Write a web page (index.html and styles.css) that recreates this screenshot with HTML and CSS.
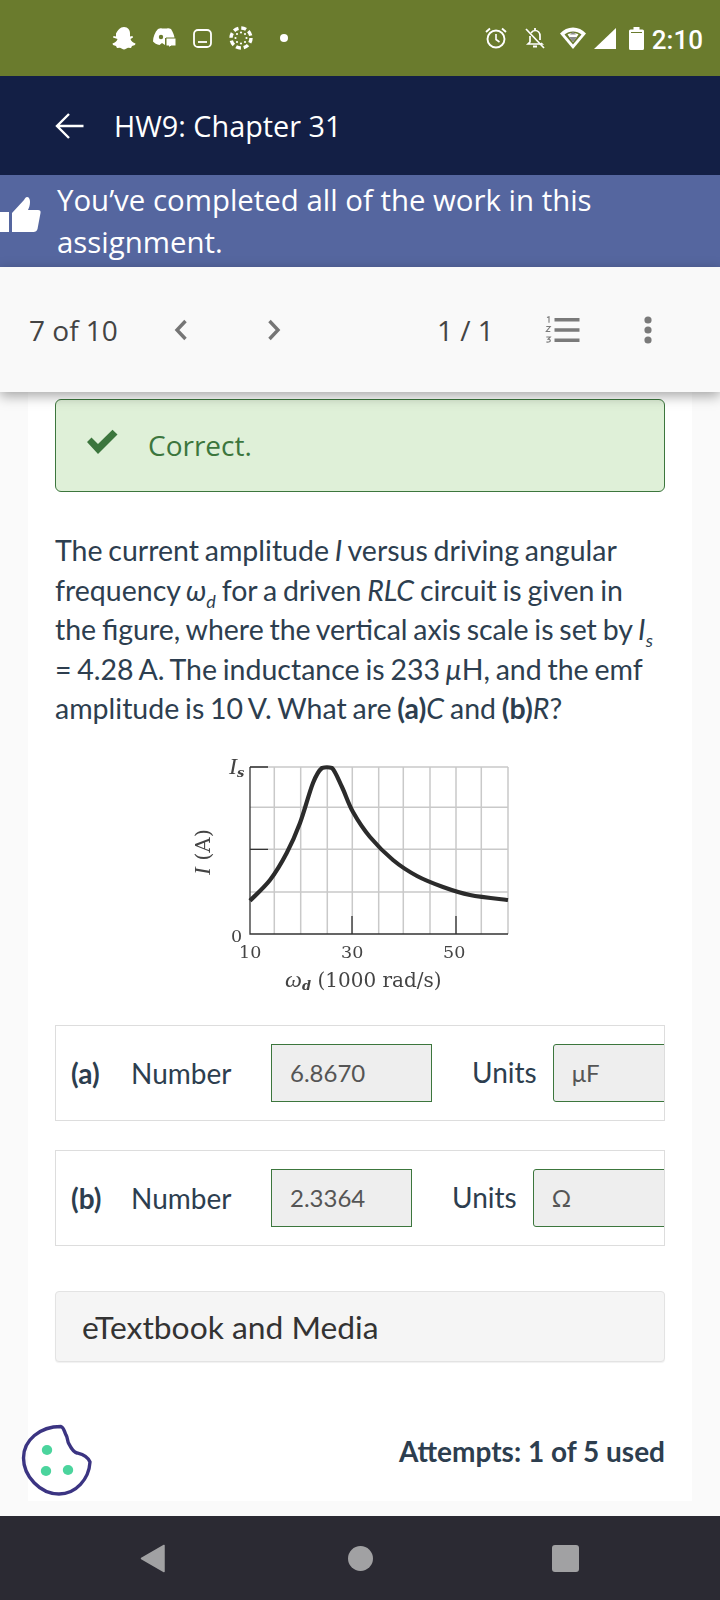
FILE: index.html
```html
<!DOCTYPE html>
<html lang="en">
<head>
<meta charset="utf-8">
<title>HW9: Chapter 31</title>
<link rel="stylesheet" href="styles.css">
</head>
<body>
<div class="screen">
  <div class="statusbar">
    <div class="status-left">
      <svg class="si-ghost" viewBox="0 0 24 24"><path d="M12 1c4 0 6 3 6 6.500v3l2.500-.5.500 1.500-2.500 1.500c.5 2 2.500 3.500 5 4.500l-.5 1.500-3 1-1 2-3-.2c-1.500.7-2.500 1.700-4 1.700s-2.500-1-4-1.700l-3 .2-1-2-3-1-.5-1.500c2.500-1 4.500-2.500 5-4.500L1 11.500 1.500 10l2.500.5v-3C6 4 8 1 12 1z" fill="#fff"/></svg>
      <svg class="si-discord" viewBox="0 0 24 22"><path d="M6 2c2-1 3-1 4-.5h5c1-.5 2-.5 4 .5 2 3 3.500 7 3.500 9H13v7l-3-2-2.500 2C5 17.500 2 16 1 14.500 1 10 3 5 6 2z" fill="#fff"/><circle cx="9" cy="10" r="2.200" fill="#6a7b2d"/><path d="M14 11h10v8h-5l-2 2v-2h-3z" fill="#fff" stroke="#6a7b2d"/></svg>
      <svg class="si-square" viewBox="0 0 19 19"><rect x="1" y="1" width="17" height="17" rx="4" fill="none" stroke="#fff" stroke-width="1.800"/><path d="M5 13h9" stroke="#fff" stroke-width="1.800"/></svg>
      <svg class="si-canvas" viewBox="0 0 24 24"><g fill="#fff"><circle cx="12" cy="6.500" r="1.100"/><circle cx="12" cy="17.500" r="1.100"/><circle cx="6.500" cy="12" r="1.100"/><circle cx="17.500" cy="12" r="1.100"/><circle cx="8" cy="8" r="1.100"/><circle cx="16" cy="8" r="1.100"/><circle cx="8" cy="16" r="1.100"/><circle cx="16" cy="16" r="1.100"/></g><circle cx="12" cy="12" r="10" fill="none" stroke="#fff" stroke-width="3.400" stroke-dasharray="5 2.850"/></svg>
      <span class="si-dot"></span>
    </div>
    <div class="status-right">
      <svg class="si-alarm" viewBox="0 0 22 22"><circle cx="11" cy="12" r="8.500" fill="none" stroke="#fff" stroke-width="1.900"/><path d="M11 7v5.500l3.500 2.500" fill="none" stroke="#fff" stroke-width="1.600"/><path d="M1 5l4-3.500M21 5l-4-3.500" stroke="#fff" stroke-width="1.900"/></svg>
      <svg class="si-bell" viewBox="0 0 22 22"><path d="M6 9v6l-2 2h14l-1-1M7 6c1-1.500 2-2.500 4-2.500 3 0 5 2.500 5 5.500v4" fill="none" stroke="#fff" stroke-width="1.700"/><path d="M9 19.500h4" stroke="#fff" stroke-width="2"/><path d="M11 1v2" stroke="#fff" stroke-width="1.800"/><path d="M2 2l18 19" stroke="#fff" stroke-width="1.700"/></svg>
      <svg class="si-wifi" viewBox="0 0 26 22"><path d="M0 6.500C3.500 2.500 8 .5 13 .5s9.500 2 13 6L13 22z" fill="#fff"/><path d="M4.500 7.500C7 5.500 9.700 4.500 13 4.500s6 1 8.500 3L13 17.500z" fill="#6a7b2d"/><path d="M7.500 7.500c1.500-1 3.500-1.500 5.500-1.500s4 .5 5.500 1.500L13 15z" fill="#fff"/><path d="M9 10h8l-4 5z" fill="#8a8a8a"/><path d="M10 7.500h6L13 4.800z" fill="#8a8a8a"/></svg>
      <svg class="si-signal" viewBox="0 0 22 21"><path d="M22 0v21H0z" fill="#fff"/></svg>
      <svg class="si-batt" viewBox="0 0 15 23"><path d="M4.500 0h6v2.500h3a1.500 1.500 0 0 1 1.500 1.500v17.500a1.500 1.500 0 0 1-1.500 1.500h-12A1.500 1.500 0 0 1 0 21.500V4a1.500 1.500 0 0 1 1.500-1.500h3z" fill="#fff"/><path d="M2 5.500h11" stroke="#6a7b2d" stroke-width="1"/></svg>
      <span class="clock">2:10</span>
    </div>
  </div>

  <header class="appbar">
    <svg class="back" viewBox="0 0 30 28"><path d="M28.500 14H2M14 2 2 14l12 12" fill="none" stroke="#fff" stroke-width="2.400"/></svg>
    <h1 class="title">HW9: Chapter 31</h1>
  </header>

  <div class="banner">
    <svg class="thumb" viewBox="0 0 41 36"><path d="M0 15h9v20H0z" fill="#fff"/><path d="M12 16 24 3c1-2 2-3 3-3 2 0 3 2 3 5 0 3-1 6-2 8h10c2 0 3 1 2.500 3l-3 16c-.5 2-2 3-4 3H12z" fill="#fff"/></svg>
    <p class="banner-text">You’ve completed all of the work in this assignment.</p>
  </div>

  <nav class="toolbar">
    <span class="count">7 of 10</span>
    <svg class="chev chev-prev" viewBox="0 0 14 22"><path d="M11.500 2 3 11l8.500 9" fill="none" stroke="#757575" stroke-width="3.400"/></svg>
    <svg class="chev chev-next" viewBox="0 0 14 22"><path d="M2.500 2 11 11l-8.500 9" fill="none" stroke="#757575" stroke-width="3.400"/></svg>
    <span class="pages">1 / 1</span>
    <svg class="list" viewBox="0 0 34 28"><g fill="#7a7a7a"><path d="M9 2h25v3.400H9zM9 12.300h25v3.400H9zM9 22.600h25v3.400H9z"/></g><g fill="none" stroke="#7a7a7a" stroke-width="1.100"><path d="M1.500 1.500 3.500.8v6"/><path d="M.8 10.500h4l-4 5h4"/><path d="M.8 21h4l-2.200 2.300c1.500 0 2.200.6 2.200 1.500s-1 1.500-4 1.200"/></g></svg>
    <svg class="more" viewBox="0 0 8 28"><g fill="#7a7a7a"><circle cx="4" cy="4" r="3.600"/><circle cx="4" cy="14" r="3.600"/><circle cx="4" cy="24" r="3.600"/></g></svg>
  </nav>

  <main class="page">
    <section class="panel">
      <div class="correct">
        <svg class="check" viewBox="0 0 34 26"><path d="M2 13 6.500 8.500 13 15 27.500 .8 32.500 5.500 13 25z" fill="#3c763d"/></svg>
        <span>Correct.</span>
      </div>
      <p class="question">The current amplitude <i>I</i> versus driving angular frequency <i>ω<sub>d</sub></i> for a driven <i>RLC</i> circuit is given in the figure, where the vertical axis scale is set by <i>I<sub>s</sub></i> = 4.28 A. The inductance is 233 <i>μ</i>H, and the emf amplitude is 10 V. What are <b>(a)</b><i>C</i> and <b>(b)</b><i>R</i>?</p>
      <figure class="figure">
        <svg class="graph" viewBox="0 0 420 260">
          <g stroke="#c9c9c9" stroke-width="1.500" fill="none">
            <path d="M124.300 17v167M150.700 17v167M177.300 17v167M202.300 17v167M228.700 17v167M253.300 17v167M280 17v167M306 17v167M331.300 17v167M358 17v167"/>
            <path d="M100 17h258M100 57.300h258M100 99.300h258M100 142h258"/>
          </g>
          <g stroke="#333" stroke-width="1.300" fill="none">
            <path d="M100 17v167h258M100 17h18M100 99.300h18M202 184v-18M306 184v-18"/>
          </g>
          <path d="M100 150.700C103.300 147.200 113.900 137.900 120 130 126.100 122.100 131.700 112.500 136.700 103 141.700 93.500 145.600 84.700 150 73 154.400 61.300 159.300 42.200 163 33 166.700 23.800 168.800 20.500 172 18 175.200 17 178.700 17 182 18 185.300 21.200 188.500 29.700 192 37 195.500 44.300 198.300 53.700 203 62 207.700 70.300 213.300 79 220 87 226.700 95 235.200 103.500 243 110 250.800 116.500 258.700 121.500 267 126 275.300 130.500 284.200 133.800 293 137 301.800 140.200 309.200 142.800 320 145 330.800 147.200 351.700 149.200 358 150" fill="none" stroke="#2b2b2b" stroke-width="4.200"/>
          <g class="gtext">
            <text x="79" y="24" class="gi gis">I<tspan class="gsub" dy="3">s</tspan></text>
            <text x="60" y="125" class="gv" transform="rotate(-90 60 125)"><tspan class="gi gvi">I</tspan> (A)</text>
            <text x="81" y="192">0</text>
            <text x="89" y="208">10</text>
            <text x="191" y="208">30</text>
            <text x="293" y="208">50</text>
            <text x="135" y="237" class="gl"><tspan class="gi gli">ω</tspan><tspan class="gsub" dy="3">d</tspan><tspan dy="-3"> (1000 rad/s)</tspan></text>
          </g>
        </svg>
      </figure>

      <div class="answer">
        <b class="part">(a)</b><span class="num">Number</span>
        <div class="field field-a">6.8670</div>
        <span class="units">Units</span>
        <div class="field field-unit">μF</div>
      </div>
      <div class="answer answer-b">
        <b class="part">(b)</b><span class="num">Number</span>
        <div class="field field-b">2.3364</div>
        <span class="units">Units</span>
        <div class="field field-unit">Ω</div>
      </div>

      <div class="media">eTextbook and Media</div>
      <div class="attempts">Attempts: 1 of 5 used</div>
      <svg class="cookie" viewBox="0 0 72 72"><path d="M40 2.500C43 3.500 43 7 45 11c2 3 1 6 3 9 2 4 4 8 8 9 4 1 10 2 13 9-1 17-14 32-31 32C19 70 2.500 52 2.500 34 2.500 16 19 2.500 40 2.500z" fill="none" stroke="#3b3482" stroke-width="3.400" stroke-linejoin="round"/><g fill="#4bd49d"><ellipse cx="26" cy="26" rx="5.200" ry="5"/><ellipse cx="25" cy="47" rx="5.200" ry="5"/><ellipse cx="47" cy="46" rx="5.200" ry="5"/></g></svg>
    </section>
  </main>

  <div class="navbar">
    <svg class="nav-back" viewBox="0 0 25 29"><path d="M24 1.500v26L1.500 14.500z" fill="#a1a1a3" stroke="#a1a1a3" stroke-width="1.500" stroke-linejoin="round"/></svg>
    <span class="nav-home"></span>
    <span class="nav-recent"></span>
  </div>
</div>
</body>
</html>
```
FILE: styles.css
```css
* { box-sizing: border-box; }
html, body { margin: 0; padding: 0; }
body { width: 720px; height: 1600px; overflow: hidden; background: #fafafa; font-family: "Lato", sans-serif; }
.screen { width: 720px; height: 1600px; display: flex; flex-direction: column; overflow: hidden; }

.statusbar { height: 76px; flex: none; background: #6a7b2d; display: flex; align-items: center; justify-content: space-between; padding: 0 17px 0 112px; }
.status-left, .status-right { display: flex; align-items: center; }
.si-ghost { width: 24px; height: 24px; margin-right: 16px; }
.si-discord { width: 24px; height: 22px; margin-right: 17px; }
.si-square { width: 19px; height: 19px; margin-right: 17px; }
.si-canvas { width: 24px; height: 24px; margin-right: 27px; }
.si-dot { width: 8px; height: 8px; border-radius: 50%; background: #fff; }
.si-alarm { width: 22px; height: 22px; margin-right: 17px; }
.si-bell { width: 22px; height: 22px; margin-right: 14px; }
.si-wifi { width: 26px; height: 22px; margin-right: 8px; }
.si-signal { width: 22px; height: 21px; margin-right: 13px; }
.si-batt { width: 15px; height: 23px; margin-right: 8px; }
.clock { font: 500 26px/30px "Roboto", sans-serif; color: #fff; position: relative; top: 2px; }

.appbar { height: 99px; flex: none; background: #131f45; display: flex; align-items: center; padding-left: 55px; }
.back { width: 30px; height: 28px; margin-right: 29px; }
.title { margin: 0; font: 400 28.8px/36px "Open Sans", sans-serif; color: #fff; }

.banner { height: 92px; flex: none; background: #55669f; display: flex; align-items: flex-start; }
.thumb { width: 41px; height: 36px; flex: none; margin: 22px 16px 0 0; }
.banner-text { margin: 4px 0 0; width: 570px; font: 400 29.4px/42px "Open Sans", sans-serif; color: #fff; }

.toolbar { height: 125px; flex: none; background: #f9f9f9; box-shadow: 0 4px 12px rgba(0,0,0,.35); position: relative; z-index: 2; display: flex; align-items: center; padding: 0 0 0 29px; }
.count, .pages { font: 400 28px/36px "Open Sans", sans-serif; color: #444; }
.count { width: 145px; }
.chev { width: 14px; height: 22px; flex: none; }
.chev-next { margin-left: 79px; margin-right: 156px; }
.pages { width: 108px; }
.list { width: 35px; height: 28px; margin-right: 64px; }
.more { width: 8px; height: 28px; }

.page { flex: 1; min-height: 0; padding: 0 28px; }
.panel { position: relative; height: 1109px; background: #fff; padding: 7px 27px 0; }

.correct { height: 93px; background: #dff0d8; border: 1px solid #3c763d; border-radius: 6px; display: flex; align-items: center; padding: 0 0 0 29px; color: #3c763d; font: 400 28px/36px "Open Sans", sans-serif; }
.correct span { position: relative; top: -1px; }
.check { width: 34px; height: 26px; margin: -8px 29px 0 0; }

.question { margin: 39px 0 0; font: 400 28.5px/39.6px "Lato", sans-serif; word-spacing: -1.500px; color: #2d3e4f; }
.question sub { font-size: 18px; line-height: 0; }

.figure { margin: 21px 0 15px; display: flex; justify-content: center; }
.graph { width: 420px; height: 260px; filter: blur(.5px); flex: none; }
.gtext text { font: 400 17.500px "DejaVu Serif", serif; fill: #444; }
.gtext .gi { font-family: "Liberation Serif", serif; font-style: italic; font-size: 22px; }
.gtext .gsub { font-family: "DejaVu Serif", serif; font-size: 13px; font-style: italic; font-weight: 700; }
.gtext .gv { font-size: 21px; }
.gtext .gvi { font-size: 23px; }
.gtext .gis { font-size: 24px; }
.gtext .gl { font-size: 20px; }
.gtext .gli { font-size: 24px; }

.answer { height: 96px; border: 1px solid #dddddd; display: flex; align-items: center; overflow: hidden; padding-left: 15px; color: #2d3e4f; font: 400 28px/36px "Lato", sans-serif; }
.answer-b { margin-top: 29px; }
.part { width: 60px; flex: none; }
.num { width: 140px; flex: none; }
.field { height: 58px; flex: none; background: #eeeeee; border: 1px solid #3c763d; color: #555; font: 400 24px/56px "Lato", sans-serif; padding-left: 18px; }
.field-a { width: 161px; }
.field-b { width: 141px; }
.field-unit { width: 140px; margin-left: 16px; border-radius: 3px 0 0 3px; }
.units { margin-left: 40px; flex: none; position: relative; top: -1px; }

.media { height: 71px; margin-top: 45px; background: #f5f5f5; border: 1px solid #e3e3e3; border-radius: 4px; box-shadow: 0 1px 1px rgba(0,0,0,.06); padding-left: 26px; font: 400 31.8px/70px "Lato", sans-serif; color: #333; }
.attempts { margin-top: 71px; text-align: right; font: 700 28px/36px "Lato", sans-serif; color: #2d3e4f; }
.cookie { position: absolute; left: -7px; top: 1032px; width: 72px; height: 72px; }

.navbar { height: 84px; flex: none; background: #2b2a33; display: flex; align-items: center; padding-left: 140px; }
.nav-back { width: 25px; height: 29px; margin-right: 183px; }
.nav-home { width: 25px; height: 25px; border-radius: 50%; background: #a1a1a3; margin-right: 179px; }
.nav-recent { width: 27px; height: 27px; border-radius: 3px; background: #a1a1a3; }
```
